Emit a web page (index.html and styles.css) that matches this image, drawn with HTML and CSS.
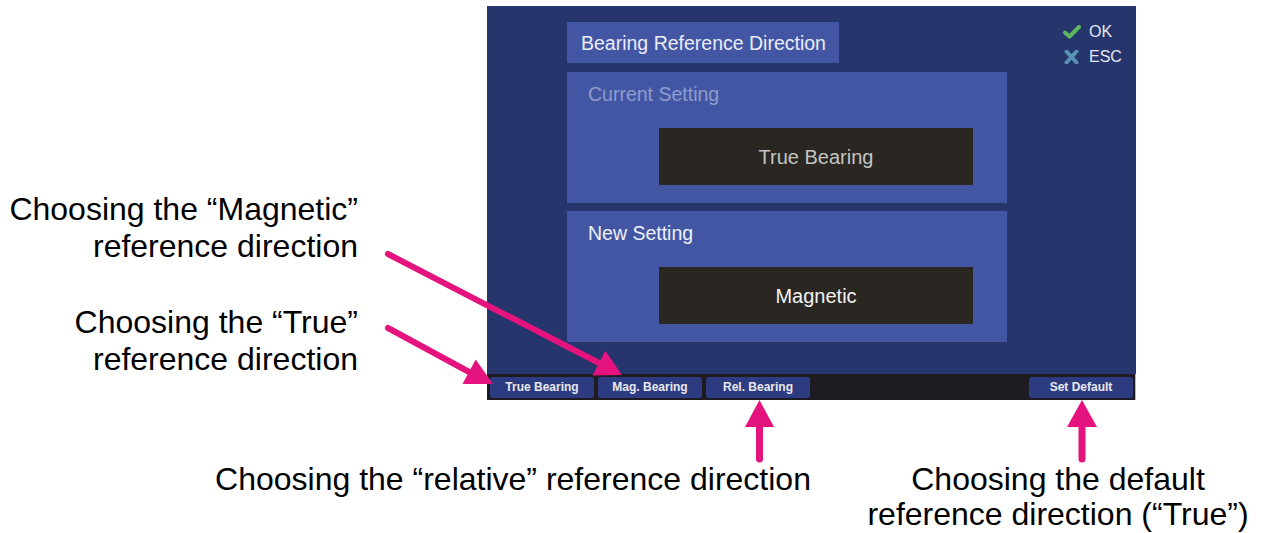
FILE: index.html
```html
<!DOCTYPE html>
<html lang="en">
<head>
    <meta charset="UTF-8">
    <meta name="viewport" content="width=device-width, initial-scale=1.0">
    <title>Bearing Reference Direction</title>
    <link rel="stylesheet" href="styles.css">
</head>
<body>

    <div class="figure">
        <div class="top">
            <div class="notes">
                <p class="note">Choosing the “Magnetic”<br>reference direction</p>
                <p class="note note-true">Choosing the “True”<br>reference direction</p>
            </div>

            <div class="screen">
                <div class="screen-main">
                    <div class="dialog">
                        <div class="dialog-title">Bearing Reference Direction</div>
                        <div class="panel">
                            <div class="panel-label dim">Current Setting</div>
                            <div class="value dim-value">True Bearing</div>
                        </div>
                        <div class="panel panel-new">
                            <div class="panel-label">New Setting</div>
                            <div class="value">Magnetic</div>
                        </div>
                    </div>
                    <div class="status">
                        <div class="status-row">
                            <svg class="icon" width="18" height="14" viewBox="0 0 18 14">
                                <path d="M2 7.5 L6.5 11.5 L16 2" fill="none" stroke="#5cb85c" stroke-width="4" stroke-linecap="round" stroke-linejoin="round"/>
                            </svg>
                            OK
                        </div>
                        <div class="status-row">
                            <svg class="icon" width="18" height="14" viewBox="0 0 18 14">
                                <path d="M3.5 1.5 L13.5 12.5 M13.5 1.5 L3.5 12.5" fill="none" stroke="#5892b2" stroke-width="4" stroke-linecap="round"/>
                            </svg>
                            ESC
                        </div>
                    </div>
                </div>
                <div class="softkeys">
                    <div class="softkey">True Bearing</div>
                    <div class="softkey">Mag. Bearing</div>
                    <div class="softkey">Rel. Bearing</div>
                    <div class="softkey softkey-right">Set Default</div>
                </div>
            </div>
        </div>

        <div class="captions">
            <p class="caption caption-rel">Choosing the “relative” reference direction</p>
            <p class="caption caption-default">Choosing the default<br>reference direction (“True”)</p>
        </div>

        <!-- callout arrows drawn over the screen -->
        <svg class="arrows" width="1262" height="533" viewBox="0 0 1262 533">
            <g fill="#e4137e" stroke="#e4137e">
                <line x1="388" y1="254" x2="601" y2="364" stroke-width="6" stroke-linecap="round"/>
                <polygon points="622,375 592.5,375.5 605.3,350.7" stroke="none"/>

                <line x1="388" y1="328" x2="471" y2="373" stroke-width="6" stroke-linecap="round"/>
                <polygon points="493,384 462.5,384 475.7,359.4" stroke="none"/>

                <line x1="759.5" y1="459" x2="759.5" y2="424" stroke-width="7" stroke-linecap="round"/>
                <polygon points="759.5,400 745,427 774,427" stroke="none"/>

                <line x1="1082" y1="459" x2="1082" y2="424" stroke-width="7" stroke-linecap="round"/>
                <polygon points="1082,400 1067,427 1097,427" stroke="none"/>
            </g>
        </svg>
    </div>

</body>
</html>
```

FILE: styles.css
```css
body {
    margin: 0;
    background-color: #ffffff;
    font-family: "Liberation Sans", Arial, sans-serif;
}
.figure {
    position: relative;
    width: 1262px;
    height: 533px;
    overflow: hidden;
}
.top {
    display: flex;
    padding-top: 6px;
}
.notes {
    width: 358px;
    margin-right: 129px;
    padding-top: 185px;
    text-align: right;
}
.note,
.caption {
    margin: 0;
    font-size: 32px;
    line-height: 37px;
    color: #000;
    white-space: nowrap;
}
.note-true {
    margin-top: 39px;
}

/* device screen */
.screen {
    width: 649px;
    height: 394px;
    display: flex;
    flex-direction: column;
    background-color: #26356b;
}
.screen-main {
    flex: 1;
    display: flex;
    padding: 16px 0 0 80px;
}
.dialog {
    width: 440px;
}
.dialog-title {
    width: 258px;
    height: 41px;
    padding-left: 14px;
    line-height: 42px;
    font-size: 19.5px;
    color: #e9ecf6;
    background-color: #4356a4;
}
.panel {
    height: 121px;
    margin-top: 9px;
    padding-top: 10px;
    background-color: #4356a4;
}
.panel-new {
    margin-top: 8px;
}
.panel-label {
    padding-left: 21px;
    line-height: 25px;
    font-size: 19.5px;
    color: #eef0f8;
}
.panel-label.dim {
    color: #8e9ccd;
}
.value {
    width: 314px;
    height: 57px;
    margin: 21px 0 0 92px;
    line-height: 59px;
    text-align: center;
    font-size: 20px;
    color: #f2f2f2;
    background-color: #2a2723;
}
.value.dim-value {
    color: #c4c4c4;
}
.status {
    margin: -3px 0 0 56px;
}
.status-row {
    display: flex;
    align-items: center;
    height: 25px;
    font-size: 16px;
    color: #e4e8f4;
}
.icon {
    margin-right: 8px;
}
.softkeys {
    display: flex;
    gap: 4px;
    height: 26px;
    padding: 3px 2px 2px 3px;
    box-sizing: border-box;
    background-color: #1e1c22;
    border-right: 1px solid #b8b8c0;
}
.softkey {
    width: 104px;
    line-height: 21px;
    text-align: center;
    font-size: 12px;
    font-weight: bold;
    color: #e8e8ee;
    background-color: #2d3c80;
    border-radius: 3px;
}
.softkey-right {
    margin-left: auto;
}

/* captions under the screen */
.captions {
    display: flex;
    margin-top: 62px;
}
.captions .caption {
    line-height: 35px;
}
.caption-rel {
    width: 700px;
    margin-left: 163px;
    text-align: center;
}
.caption-default {
    width: 390px;
    text-align: center;
}
.arrows {
    position: absolute;
    top: 0;
    left: 0;
    pointer-events: none;
}
```
